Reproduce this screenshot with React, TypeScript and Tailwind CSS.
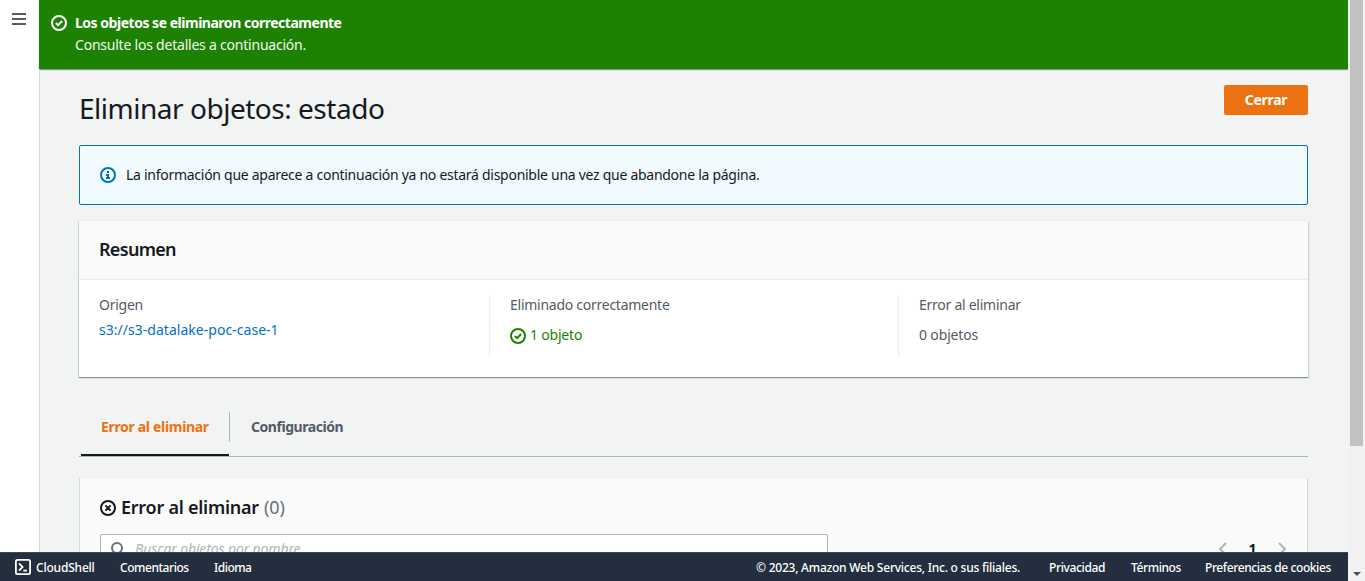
import type { ReactNode } from "react";

function CheckCircle({ className }: { className?: string }) {
  return (
    <svg viewBox="0 0 16 16" className={className} fill="none" stroke="currentColor" strokeWidth="2">
      <circle cx="8" cy="8" r="7" />
      <path d="M4.9 8l2.2 2.1 4-4.1" />
    </svg>
  );
}

function ErrorCircle({ className }: { className?: string }) {
  return (
    <svg viewBox="0 0 16 16" className={className} fill="none" stroke="currentColor" strokeWidth="2">
      <circle cx="8" cy="8" r="7" />
      <path d="M5.4 5.4l5.2 5.2M10.6 5.4l-5.2 5.2" />
    </svg>
  );
}

function InfoCircle({ className }: { className?: string }) {
  return (
    <svg viewBox="0 0 16 16" className={className} fill="none" stroke="currentColor" strokeWidth="2">
      <circle cx="8" cy="8" r="7" />
      <path d="M7 5h2M6 8h2v3M6 11h4" />
    </svg>
  );
}

function SearchIcon() {
  return (
    <svg viewBox="0 0 16 16" className="size-4 shrink-0 text-[#687078]" fill="none" stroke="currentColor" strokeWidth="2">
      <circle cx="7" cy="6" r="5" />
      <path d="M10.8 9.8L15 14" />
    </svg>
  );
}

function Chevron({ d }: { d: string }) {
  return (
    <svg viewBox="0 0 16 16" className="size-4 text-[#aab7b8]" fill="none" stroke="currentColor" strokeWidth="2">
      <path d={d} />
    </svg>
  );
}

function ShellIcon() {
  return (
    <svg viewBox="0 0 16 16" className="size-4 shrink-0" fill="none" stroke="currentColor" strokeWidth="1.8">
      <rect x="0.9" y="0.9" width="14.2" height="14.2" rx="1.6" />
      <path d="M4 4.4L7.6 8 4 11.6M8.3 11.6h3.6" />
    </svg>
  );
}

function Field({ label, className, children }: { label: string; className: string; children: ReactNode }) {
  return (
    <div className={`h-[62px] ${className}`}>
      <div className="h-5 leading-5 tracking-[-0.26px] text-[#545b64]">{label}</div>
      {children}
    </div>
  );
}

export default function App() {
  return (
    <div className="flex h-[581px] w-[1365px] overflow-hidden bg-[#f2f3f3] font-['Noto_Sans',sans-serif] text-sm text-[#16191f]">
      <div className="flex h-[581px] w-[1348px] flex-col">
        <div className="flex h-[552px] overflow-hidden">
          <nav className="w-[39px] shrink-0 bg-white pt-[13px] pl-3">
            <svg viewBox="0 0 14 12" className="h-3 w-3.5" fill="none" stroke="#545b64" strokeWidth="2">
              <path d="M0 1h14M0 6h14M0 11h14" />
            </svg>
          </nav>
          <main className="w-[1309px] shrink-0">
            <div className="flex h-[69px] bg-[#1d8102] pt-3 pl-3 leading-[22px] text-white shadow-[0_1px_1px_0_#879596]">
              <CheckCircle className="mt-[3px] size-4 shrink-0" />
              <div className="pl-2">
                <div className="font-bold tracking-[-0.48px]">Los objetos se eliminaron correctamente</div>
                <div className="tracking-[-0.22px] text-[#f2f8f0]">Consulte los detalles a continuación.</div>
              </div>
            </div>
            <div className="h-[483px] border-l border-[#d5dbdb] pl-[39px]">
              <div className="flex h-[76px] w-[1229px] items-start justify-between pt-4">
                <h1 className="mt-[3px] text-[28px] leading-10 tracking-[-0.48px]">Eliminar objetos: estado</h1>
                <button className="h-[30px] w-[84px] rounded-xs bg-[#ec7211] font-bold tracking-[-0.3px] text-white">
                  Cerrar
                </button>
              </div>
              <div className="flex h-[60px] w-[1229px] items-center rounded-xs border border-[#0073bb] bg-[#f1faff] pl-5">
                <InfoCircle className="size-4 text-[#0073bb]" />
                <span className="pl-2.5 tracking-[-0.275px]">
                  La información que aparece a continuación ya no estará disponible una vez que abandone la página.
                </span>
              </div>

              <section className="mt-4 h-[156px] w-[1229px] bg-white shadow-[0_1px_1px_0_#879596,1px_1px_1px_0_#d5dbdb,-1px_0_0_0_#d5dbdb,0_-1px_0_0_#eaeded]">
                <h2 className="flex h-[59px] items-center border-b border-[#eaeded] bg-[#fafafa] pb-0.5 pl-5 text-lg font-semibold tracking-[-0.7px]">
                  Resumen
                </h2>
                <div className="flex pt-[15px]">
                  <Field label="Origen" className="w-[410px] pl-5">
                    <a className="block h-[30px] leading-[30px] tracking-[0.03px] text-[#0073bb]">s3://s3-datalake-poc-case-1</a>
                  </Field>
                  <Field label="Eliminado correctamente" className="w-[409px] border-l border-[#eaeded] pl-5">
                    <div className="flex h-10 items-center gap-1 tracking-[-0.2px] text-[#1d8102]">
                      <CheckCircle className="mt-0.5 size-4" />
                      <span>1 objeto</span>
                    </div>
                  </Field>
                  <Field label="Error al eliminar" className="w-[410px] border-l border-[#eaeded] pl-5">
                    <div className="h-10 leading-10 tracking-[-0.15px] text-[#545b64]">0 objetos</div>
                  </Field>
                </div>
              </section>

              <div className="mt-[35px] flex h-[45px] w-[1229px] border-b border-[#aab7b8] pl-0.5 font-bold">
                <div className="h-[44px] w-[148px] border-b-2 border-[#16191f] pl-5 leading-[30px] tracking-[-0.32px] text-[#ec7211]">
                  Error al eliminar
                </div>
                <div className="h-[30px] border-l border-[#aab7b8] pl-[21px] leading-[30px] tracking-[-0.45px] text-[#545b64]">
                  Configuración
                </div>
              </div>

              <section className="mt-[21px] ml-px h-[120px] w-[1227px] bg-[#fafafa] px-5 pt-[15px] shadow-[1px_1px_1px_0_#d5dbdb,-1px_0_0_0_#d5dbdb,0_-1px_0_0_#eaeded]">
                <div className="flex h-[30px] items-center text-lg">
                  <ErrorCircle className="size-4" />
                  <span className="pb-0.5 pl-[5px] font-semibold tracking-[-0.25px]">Error al eliminar</span>
                  <span className="pb-0.5 pl-[5px] text-[#687078]">(0)</span>
                </div>
                <div className="mt-[11px] flex items-center justify-between">
                  <div className="flex h-[32px] w-[728px] items-center rounded-xs border border-[#aab7b8] bg-white pl-[9px] text-[#aab7b8]">
                    <SearchIcon />
                    <span className="pb-0.5 pl-[9px] tracking-[-0.13px] italic">Buscar objetos por nombre</span>
                  </div>
                  <div className="-mr-[3px] flex items-center pb-0.5">
                    <Chevron d="M11 2L5 8l6 6" />
                    <span className="w-[43px] text-center font-bold">1</span>
                    <Chevron d="M5 2l6 6-6 6" />
                  </div>
                </div>
              </section>
            </div>
          </main>
        </div>
        <footer className="flex h-[29px] items-center justify-between border-t border-[#414750] bg-[#232f3e] pl-[15px] text-xs font-medium whitespace-nowrap text-white">
          <div className="flex items-center">
            <ShellIcon />
            <span className="w-[89px] pt-px pl-[5px] tracking-[-0.2px]">CloudShell</span>
            <span className="w-[94px] pt-px tracking-[-0.45px]">Comentarios</span>
            <span className="pt-px tracking-[-0.5px]">Idioma</span>
          </div>
          <div className="flex pt-px">
            <span className="w-[293px] tracking-[-0.23px]">© 2023, Amazon Web Services, Inc. o sus filiales.</span>
            <span className="w-[82px] tracking-[-0.35px]">Privacidad</span>
            <span className="w-[74px] tracking-[-0.4px]">Términos</span>
            <span className="w-[143px] tracking-[-0.4px]">Preferencias de cookies</span>
          </div>
        </footer>
      </div>
      <div className="flex w-[17px] flex-col items-center bg-[#f1f1f1]">
        <div className="h-[446px] w-[13px] bg-[#c1c1c1]" />
        <svg viewBox="0 0 8 4" className="mt-auto mb-[5px] h-1 w-2" fill="#505050">
          <path d="M0 0h8L4 4z" />
        </svg>
      </div>
    </div>
  );
}
